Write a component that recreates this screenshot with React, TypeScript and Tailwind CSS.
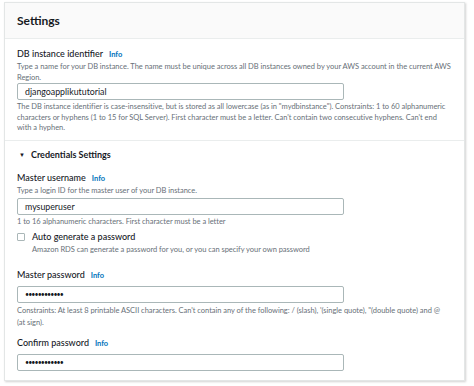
import React from "react";

const font = { fontFamily: 'Lato, "Open Sans", "Liberation Sans", sans-serif' };

function Info() {
  return <span className="ml-[6px] text-[7.5px] font-bold text-[#0073bb]">Info</span>;
}

function Label({ children, info = true }: { children: React.ReactNode; info?: boolean }) {
  return (
    <div className="flex items-baseline text-[9px] leading-[12px] font-medium text-[#16191f]">
      <span>{children}</span>
      {info && <Info />}
    </div>
  );
}

function Input({ value, password = false }: { value: string; password?: boolean }) {
  return (
    <div className="flex h-[17px] w-[327px] items-center rounded-[2px] border border-[#aab7b8] bg-white pl-[7px]">
      {password ? (
        <span className="text-[7px] tracking-[-0.9px] text-[#16191f]">{value}</span>
      ) : (
        <span className="text-[8.8px] text-[#16191f]">{value}</span>
      )}
    </div>
  );
}

const desc = "whitespace-nowrap text-[7.5px] tracking-[-0.03px] text-[#687078]";

export default function App() {
  return (
    <div className="h-[386px] w-[474px] bg-white pl-[4px] pt-[2px]" style={font}>
      <div className="flex h-[379px] w-[461px] flex-col overflow-hidden border border-[#e3e6e6] bg-white shadow-[1px_1px_2px_rgba(0,0,0,0.18)]">
        <div className="flex h-[36px] items-center border-b border-[#eaeded] bg-[#fafafa] pl-[12px]">
          <span className="text-[12px] font-bold text-[#16191f]">Settings</span>
        </div>
        <div className="flex flex-col pl-[12px] pr-[5px] pt-[9px]">
          <Label>DB instance identifier</Label>
          <div className={`${desc} leading-[11px]`}>
            Type a name for your DB instance. The name must be unique across all DB instances owned by your AWS account in the current AWS
            <br />
            Region.
          </div>
          <Input value="djangoapplikututorial" />
          <div className={`${desc} mt-[2px] leading-[10.5px]`}>
            The DB instance identifier is case-insensitive, but is stored as all lowercase (as in "mydbinstance"). Constraints: 1 to 60 alphanumeric
            <br />
            characters or hyphens (1 to 15 for SQL Server). First character must be a letter. Can't contain two consecutive hyphens. Can't end
            <br />
            with a hyphen.
          </div>
        </div>
        <div className="mt-[6px] border-t border-[#eaeded]" />
        <div className="flex flex-col pl-[12px] pr-[5px] pt-[8px]">
          <div className="flex items-center text-[9px] leading-[12px] font-bold text-[#16191f]">
            <span className="ml-[2px] mr-[6px] text-[6px]">▼</span>
            <span>Credentials Settings</span>
          </div>
          <div className="mt-[11px]">
            <Label>Master username</Label>
          </div>
          <div className={`${desc} leading-[11px]`}>
            Type a login ID for the master user of your DB instance.
          </div>
          <div className="mt-[2.5px]">
            <Input value="mysuperuser" />
          </div>
          <div className={`${desc} mt-[2px] leading-[10.5px]`}>
            1 to 16 alphanumeric characters. First character must be a letter
          </div>
          <div className="mt-[3px] flex">
            <div className="mt-[2px] h-[8px] w-[8px] rounded-[1px] border border-[#aab7b8] bg-white" />
            <div className="ml-[7px] flex flex-col">
              <div className="text-[9px] leading-[12px] font-medium text-[#16191f]">Auto generate a password</div>
              <div className={`${desc} mt-[1px] leading-[11px]`}>
                Amazon RDS can generate a password for you, or you can specify your own password
              </div>
            </div>
          </div>
          <div className="mt-[14px]">
            <Label>Master password</Label>
          </div>
          <div className="mt-[4px]">
            <Input value="••••••••••••" password />
          </div>
          <div className={`${desc} mt-[2.5px] leading-[11.5px]`}>
            Constraints: At least 8 printable ASCII characters. Can't contain any of the following: / (slash), '(single quote), "(double quote) and @
            <br />
            (at sign).
          </div>
          <div className="mt-[9px]">
            <Label>Confirm password</Label>
          </div>
          <div className="mt-[3.5px]">
            <Input value="••••••••••••" password />
          </div>
        </div>
      </div>
    </div>
  );
}
